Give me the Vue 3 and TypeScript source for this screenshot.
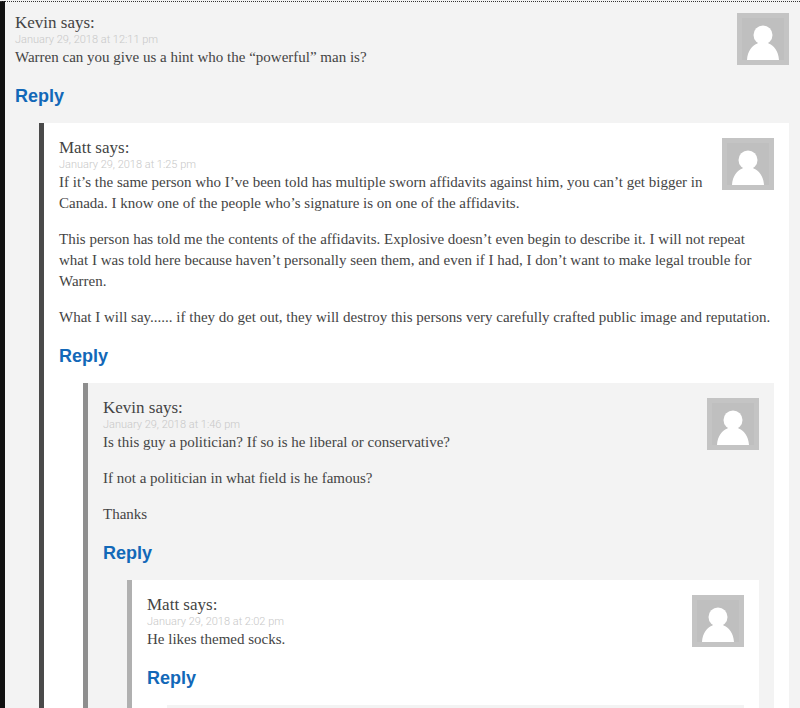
<script setup lang="ts">
interface Comment {
  author?: string
  date?: string
  body?: string[]
  replies?: Comment[]
}

const thread: Comment[] = [
  {
    author: 'Kevin',
    date: 'January 29, 2018 at 12:11 pm',
    body: ['Warren can you give us a hint who the “powerful” man is?'],
    replies: [
      {
        author: 'Matt',
        date: 'January 29, 2018 at 1:25 pm',
        body: [
          'If it’s the same person who I’ve been told has multiple sworn affidavits against him, you can’t get bigger in Canada. I know one of the people who’s signature is on one of the affidavits.',
          'This person has told me the contents of the affidavits. Explosive doesn’t even begin to describe it. I will not repeat what I was told here because haven’t personally seen them, and even if I had, I don’t want to make legal trouble for Warren.',
          'What I will say...... if they do get out, they will destroy this persons very carefully crafted public image and reputation.',
        ],
        replies: [
          {
            author: 'Kevin',
            date: 'January 29, 2018 at 1:46 pm',
            body: [
              'Is this guy a politician? If so is he liberal or conservative?',
              'If not a politician in what field is he famous?',
              'Thanks',
            ],
            replies: [
              {
                author: 'Matt',
                date: 'January 29, 2018 at 2:02 pm',
                body: ['He likes themed socks.'],
                replies: [{}],
              },
            ],
          },
        ],
      },
    ],
  },
]

const props = withDefaults(defineProps<{ comments?: Comment[]; depth?: number }>(), { depth: 1 })
const items = props.comments ?? thread
</script>

<template>
  <ol class="list" :class="{ thread: depth === 1 }">
    <li v-for="(c, i) in items" :key="i" class="comment" :class="'depth-' + depth">
      <article v-if="c.author">
        <svg class="avatar" viewBox="0 0 52 52" aria-hidden="true">
          <rect width="52" height="52" fill="#c4c4c4" />
          <rect x="5" y="5" width="42" height="42" fill="#bfbfbf" />
          <circle cx="26" cy="22" r="9.500" fill="#fff" />
          <path d="M10 47C10.500 38 15.500 32 20.500 30.500L21.500 28H30.500L31.500 30.500C36.500 32 41.500 38 42 47Z" fill="#fff" />
        </svg>
        <header class="author">{{ c.author }} says:</header>
        <a class="date" href="#">{{ c.date }}</a>
        <div class="body">
          <p v-for="(text, n) in c.body" :key="n">{{ text }}</p>
        </div>
        <a class="reply" href="#">Reply</a>
      </article>
      <App v-if="c.replies" :comments="c.replies" :depth="depth + 1" />
    </li>
  </ol>
</template>

<style>
body {
  margin: 0;
  background: #f3f3f3;
}
</style>

<style scoped>
.list {
  list-style: none;
  margin: 0;
  padding: 0 0 0 24px;
}
.thread {
  box-sizing: border-box;
  height: 100vh;
  overflow: hidden;
  padding: 1px 0 0;
}
.comment {
  padding: 15px;
  border-left: 5px solid #111;
  background: #fff;
  color: #444;
  font-family: "Liberation Serif", serif;
}
.depth-1 {
  position: relative;
  min-height: 100vh;
  padding: 12px 11px 12px 10px;
  background: #f3f3f3;
}
.depth-1::before {
  content: "";
  position: absolute;
  top: 0;
  left: -5px;
  right: 0;
  border-top: 1px dotted #333;
}
.depth-2 {
  border-left-color: #4a4a4a;
}
.depth-3 {
  border-left-color: #8e8e8e;
  background: #f3f3f3;
}
.depth-4 {
  border-left-color: #b0b0b0;
}
.depth-4 > .list {
  padding-left: 20px;
}
.depth-5 {
  border-left-color: #f3f3f3;
  background: #f3f3f3;
}
.avatar {
  float: right;
  width: 52px;
  height: 52px;
  margin-left: 15px;
}
.author {
  font-size: 17px;
  line-height: 20px;
}
.date {
  display: block;
  color: #c8c8c8;
  font-family: Roboto, sans-serif;
  font-size: 11px;
  font-weight: 300;
  line-height: 14px;
  text-decoration: none;
}
.body {
  font-size: 15px;
  line-height: 21px;
}
.body p {
  margin: 0 0 15px;
}
.reply {
  display: block;
  width: fit-content;
  margin-bottom: 13px;
  color: #1268b8;
  font: bold 18px/27px "Liberation Sans", sans-serif;
  text-decoration: none;
}
</style>
